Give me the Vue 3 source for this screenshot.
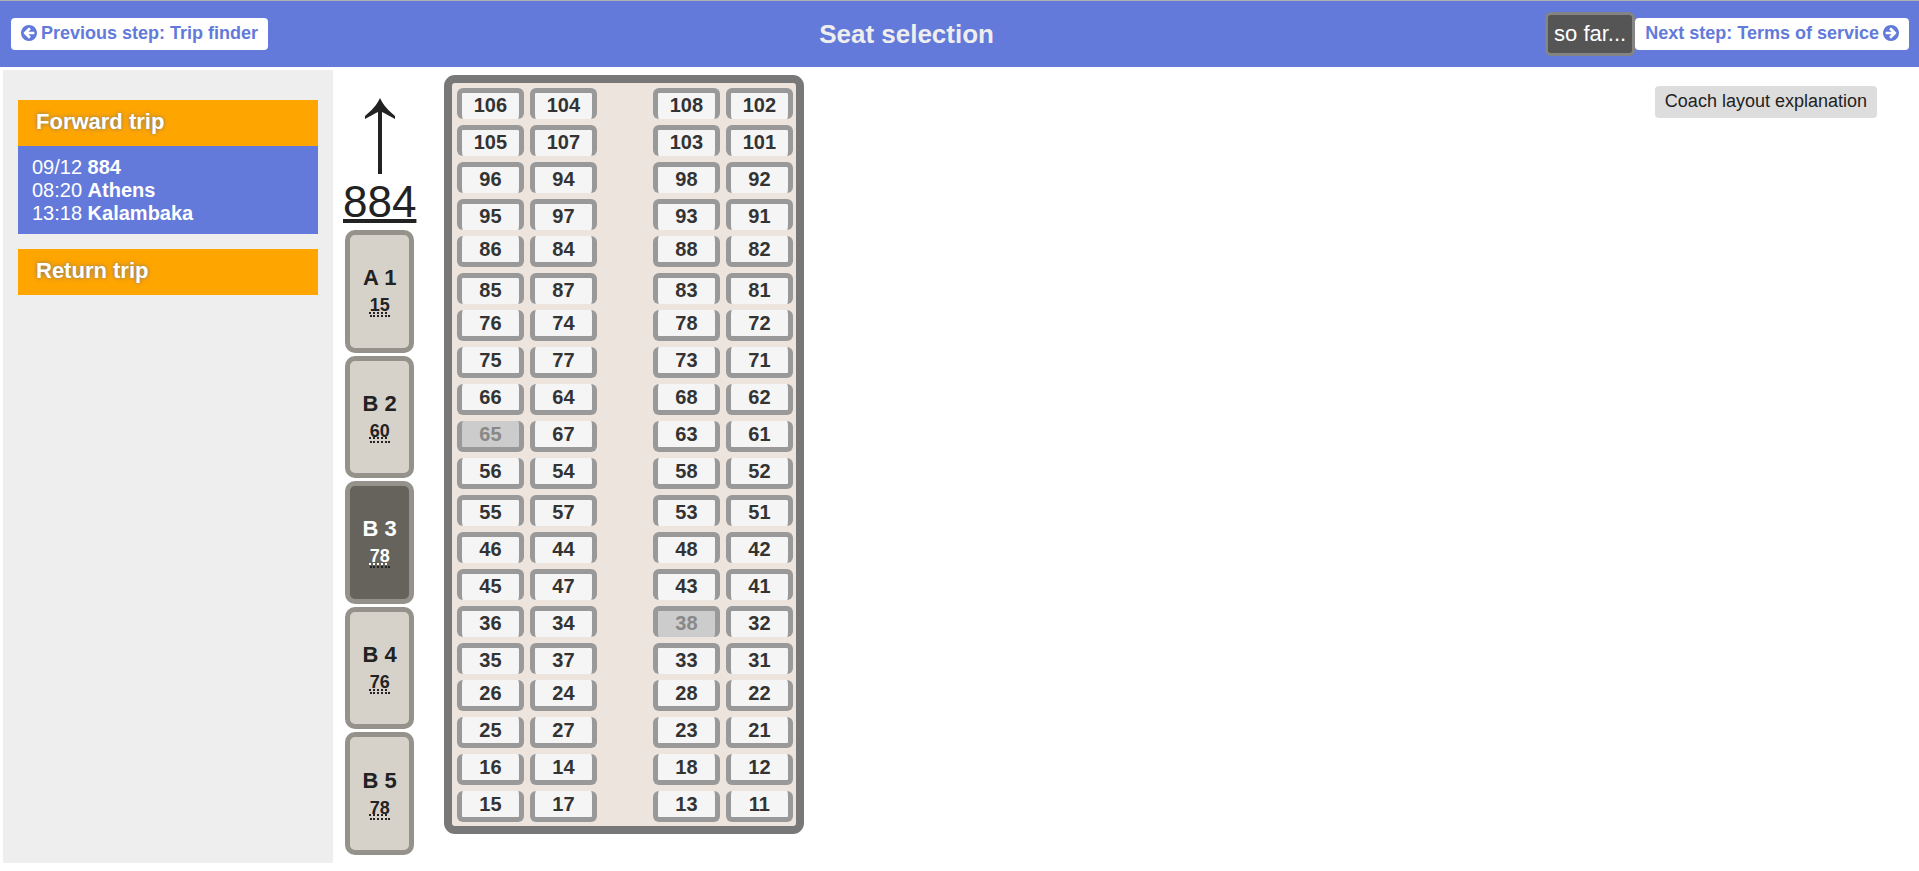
<script setup>
import { ref } from 'vue'

const trainNumber = '884'

const coaches = [
  { name: 'A 1', free: 15 },
  { name: 'B 2', free: 60 },
  { name: 'B 3', free: 78 },
  { name: 'B 4', free: 76 },
  { name: 'B 5', free: 78 }
]
const activeCoach = ref('B 3')

// Each row: two seats left of the aisle, two seats right of it.
// "up" seats have their backrest at the top, "down" seats at the bottom.
const rows = [
  { facing: 'up', left: [106, 104], right: [108, 102] },
  { facing: 'up', left: [105, 107], right: [103, 101] },
  { facing: 'up', left: [96, 94], right: [98, 92] },
  { facing: 'up', left: [95, 97], right: [93, 91] },
  { facing: 'down', left: [86, 84], right: [88, 82] },
  { facing: 'up', left: [85, 87], right: [83, 81] },
  { facing: 'down', left: [76, 74], right: [78, 72] },
  { facing: 'down', left: [75, 77], right: [73, 71] },
  { facing: 'down', left: [66, 64], right: [68, 62] },
  { facing: 'down', left: [65, 67], right: [63, 61] },
  { facing: 'down', left: [56, 54], right: [58, 52] },
  { facing: 'up', left: [55, 57], right: [53, 51] },
  { facing: 'up', left: [46, 44], right: [48, 42] },
  { facing: 'up', left: [45, 47], right: [43, 41] },
  { facing: 'up', left: [36, 34], right: [38, 32] },
  { facing: 'up', left: [35, 37], right: [33, 31] },
  { facing: 'down', left: [26, 24], right: [28, 22] },
  { facing: 'down', left: [25, 27], right: [23, 21] },
  { facing: 'down', left: [16, 14], right: [18, 12] },
  { facing: 'down', left: [15, 17], right: [13, 11] }
]
const taken = new Set([65, 38])

const circleArrow =
  'M1413 896q0-27-18-45l-91-91-362-362q-18-18-45-18t-45 18l-91 91q-18 18-18 45t18 45l189 189H448q-26 0-45 19t-19 45v128q0 26 19 45t45 19h502l-189 189q-19 19-19 45t19 45l91 91q18 18 45 18t45-18l362-362 91-91q18-18 18-45zM1664 896q0 209-103 385.5T1281.500 1561 896 1664t-385.500-103T231 1281.500 128 896t103-385.500T510.500 231 896 128t385.500 103T1561 510.500 1664 896z'
</script>

<template>
  <div class="page">
    <header class="topbar">
      <button type="button" class="step">
        <svg class="icon" viewBox="128 128 1536 1536" aria-hidden="true">
          <path transform="translate(1792 0) scale(-1 1)" :d="circleArrow" />
        </svg>
        <span>Previous step: Trip finder</span>
      </button>
      <h1 class="title">Seat selection</h1>
      <div class="actions">
        <button type="button" class="so-far">so far...</button>
        <button type="button" class="step">
          <span>Next step: Terms of service</span>
          <svg class="icon" viewBox="128 128 1536 1536" aria-hidden="true">
            <path :d="circleArrow" />
          </svg>
        </button>
      </div>
    </header>

    <main class="content">
      <aside class="sidebar">
        <section>
          <h2 class="trip-title">Forward trip</h2>
          <div class="trip-body">
            <div>09/12 <b>884</b></div>
            <div>08:20 <b>Athens</b></div>
            <div>13:18 <b>Kalambaka</b></div>
          </div>
        </section>
        <section>
          <h2 class="trip-title">Return trip</h2>
        </section>
      </aside>

      <div class="train">
        <svg class="direction" viewBox="0 0 32 76" aria-hidden="true">
          <path d="M16 0C19 7 25 13 31 18V21C26 18 22 16 18 14V76H14V14C10 16 6 18 1 21V18C7 13 13 7 16 0z" />
        </svg>
        <div class="train-number">{{ trainNumber }}</div>
        <nav class="coaches" aria-label="Coaches">
          <button
            v-for="coach in coaches"
            :key="coach.name"
            type="button"
            class="coach"
            :class="{ active: coach.name === activeCoach }"
            @click="activeCoach = coach.name"
          >
            <span class="coach-name">{{ coach.name }}</span>
            <abbr class="coach-free" title="Free seats">{{ coach.free }}</abbr>
          </button>
        </nav>
      </div>

      <div class="seat-map">
        <div v-for="row in rows" :key="row.left[0]" class="seat-row">
          <div v-for="side in [row.left, row.right]" :key="side[0]" class="pair">
            <button
              v-for="seat in side"
              :key="seat"
              type="button"
              class="seat"
              :class="row.facing"
              :disabled="taken.has(seat)"
            >{{ seat }}</button>
          </div>
        </div>
      </div>

      <button type="button" class="explain">Coach layout explanation</button>
    </main>
  </div>
</template>

<style>
body {
  background: #fff;
}
</style>

<style scoped>
.page {
  font-family: "Liberation Sans", Arial, sans-serif;
  color: #222;
}

button {
  font-family: inherit;
  margin: 0;
  border: 0;
  cursor: pointer;
}

.topbar {
  display: flex;
  align-items: center;
  justify-content: space-between;
  box-sizing: border-box;
  min-height: 67px;
  padding: 0 10px 0 11px;
  border-top: 1px solid #b0b0b0;
  background: #637ada;
}

.step {
  display: flex;
  align-items: center;
  gap: 4px;
  height: 32px;
  padding: 0 10px 2px;
  border-radius: 4px;
  background: #fff;
  color: #637ada;
  font-size: 18px;
  font-weight: bold;
  white-space: nowrap;
}

.icon {
  width: 16px;
  height: 16px;
  fill: currentColor;
}

.title {
  margin: 0;
  color: #eee;
  font-size: 26px;
  line-height: 30px;
}

.actions {
  display: flex;
  align-items: center;
}

.so-far {
  height: 44px;
  padding: 0 6px;
  border: 3px solid #848484;
  border-radius: 6px;
  background: #555;
  color: #fff;
  font-size: 22px;
  white-space: nowrap;
}

.content {
  display: flex;
  padding: 3px 42px 8px 3px;
}

.sidebar {
  flex: none;
  display: flex;
  flex-direction: column;
  gap: 15px;
  box-sizing: border-box;
  width: 330px;
  padding: 30px 15px;
  background: #eee;
}

.trip-title {
  margin: 0;
  padding: 9px 18px 11px;
  background: #ffa500;
  color: #fff;
  font-size: 22px;
  line-height: 26px;
  text-shadow: 0 0 4px #777;
}

.trip-body {
  padding: 10px 14px 9px;
  background: #637ada;
  color: #fff;
  font-size: 20px;
  line-height: 23px;
}

.train {
  flex: none;
  display: flex;
  flex-direction: column;
  align-items: center;
  margin-left: 10px;
  padding: 28px 0 8px;
}

.direction {
  width: 32px;
  height: 76px;
  fill: #222;
}

.train-number {
  margin: 3px 0;
  font-size: 44px;
  line-height: 50px;
  text-decoration: underline;
  text-decoration-thickness: 4px;
}

.coaches {
  display: grid;
  grid-auto-rows: 1fr;
  gap: 3px;
  width: 69px;
  height: 625px;
}

.coach {
  display: flex;
  flex-direction: column;
  align-items: center;
  justify-content: center;
  gap: 5px;
  padding: 0;
  border: 5px solid #95918b;
  border-radius: 10px;
  background: #d6d2ca;
  color: #222;
  font-weight: bold;
}

.coach.active {
  background: #66625c;
  color: #fff;
}

.coach-name {
  font-size: 22px;
  line-height: 25px;
}

.coach-free {
  border-bottom: 2px dotted #222;
  font-size: 18px;
  line-height: 20px;
  text-decoration: underline dotted;
  text-decoration-thickness: 2px;
  text-underline-offset: 1px;
}

.seat-map {
  flex: none;
  display: flex;
  flex-direction: column;
  gap: 6px;
  align-self: flex-start;
  margin: 5px 0 0 28px;
  padding: 5px 3px 4px 5px;
  border: 8px solid #787878;
  border-radius: 11px;
  background: #ece4dd;
}

.seat-row {
  display: flex;
  gap: 56px;
}

.pair {
  display: flex;
  gap: 6px;
}

.seat {
  box-sizing: border-box;
  width: 67px;
  height: 31px;
  padding: 0 1px 2px 0;
  border: 5px solid #999;
  border-radius: 6px;
  background: #f5f5f5;
  color: #333;
  font-size: 20px;
  font-weight: bold;
  line-height: 24px;
}

.seat.up {
  border-bottom: 0;
}

.seat.down {
  padding-bottom: 0;
  border-top: 0;
}

.seat:disabled {
  background: #ccc;
  color: #888;
  cursor: default;
}

.explain {
  height: 32px;
  margin: 16px 0 0 auto;
  padding: 0 10px 2px;
  border-radius: 4px;
  background: #ddd;
  color: #222;
  font-size: 18px;
  white-space: nowrap;
}
</style>
